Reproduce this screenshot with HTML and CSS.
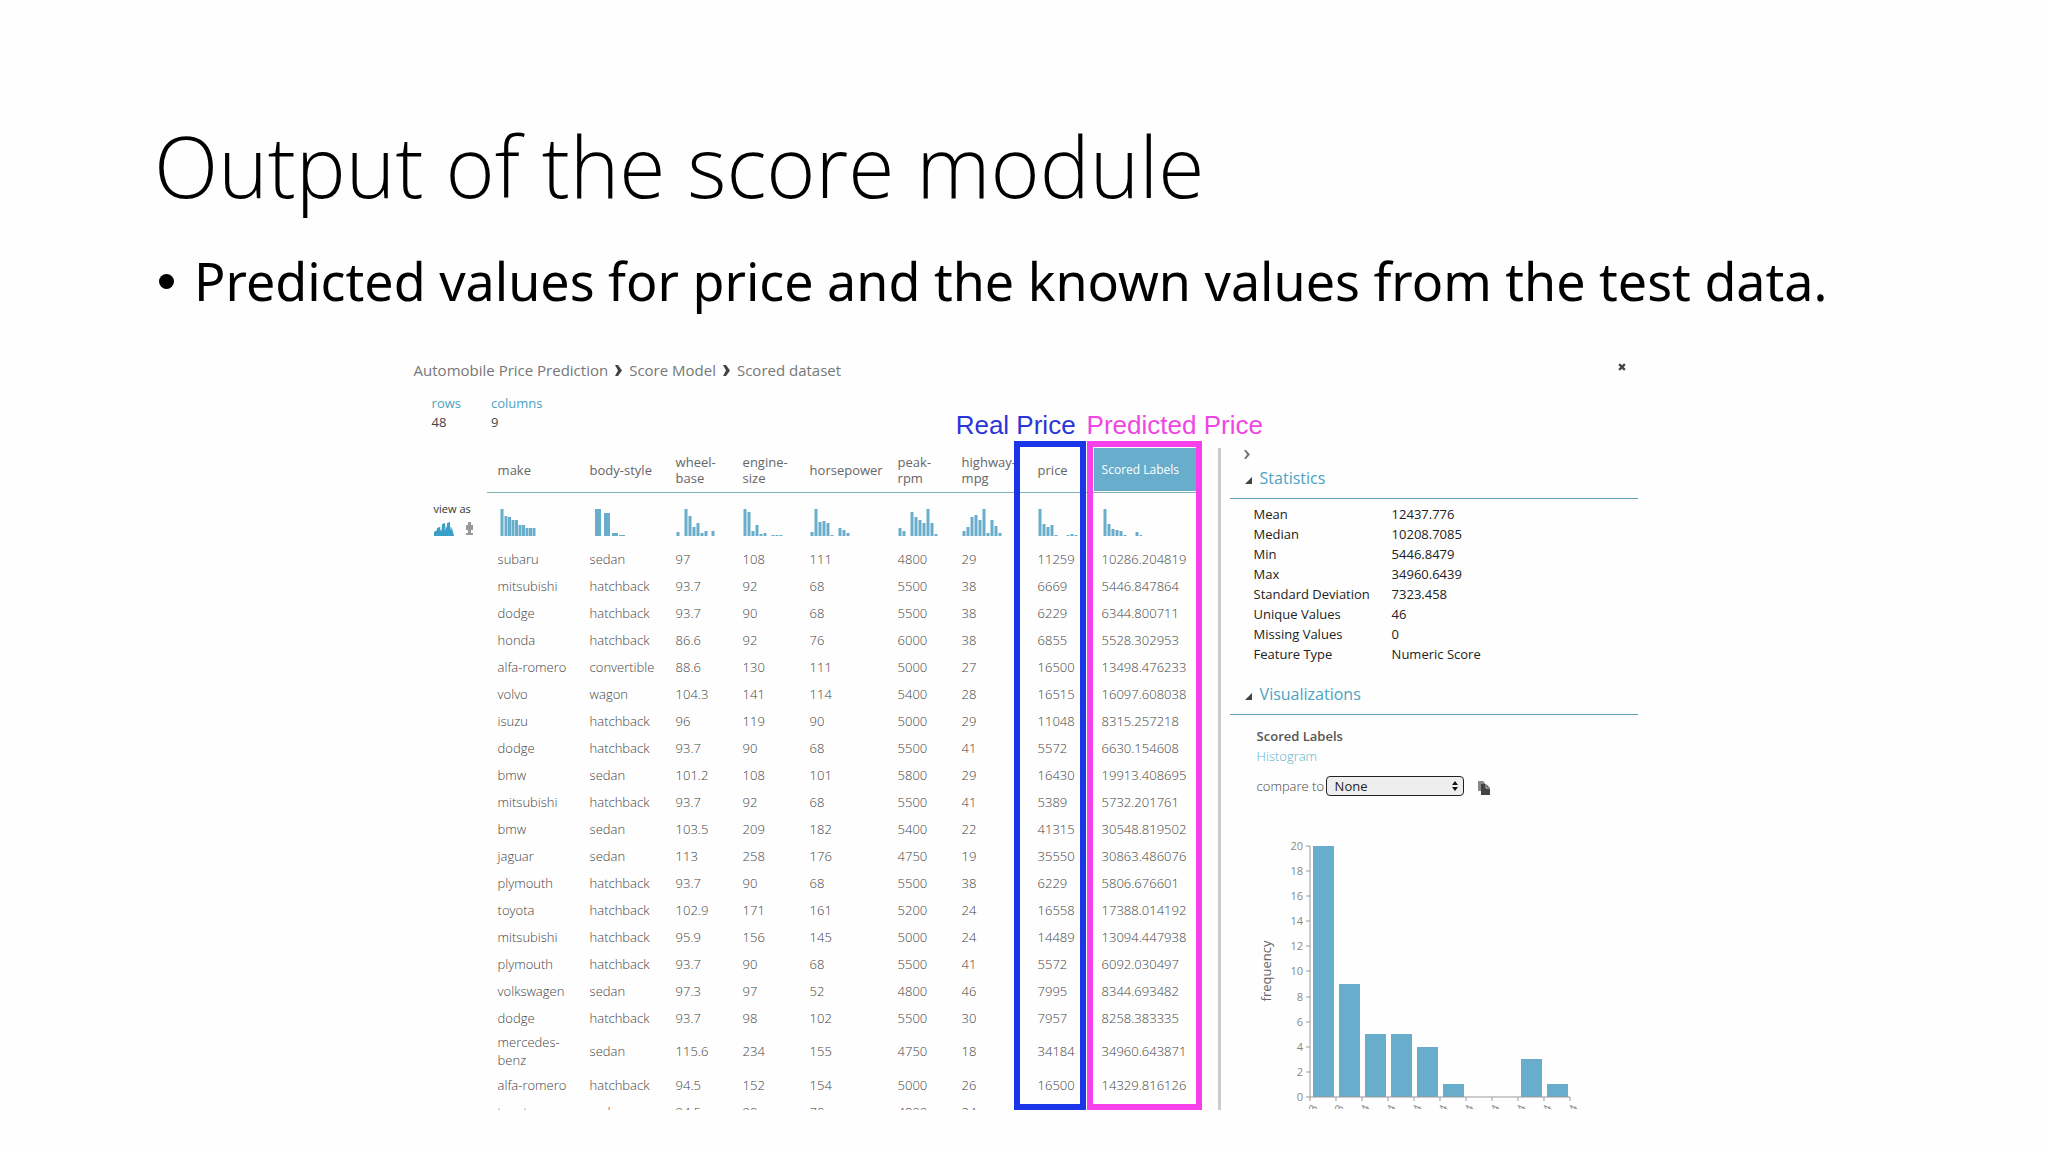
FILE: index.html
```
<!DOCTYPE html>
<html lang="en">
<head>
    <meta charset="UTF-8">
    <meta name="viewport" content="width=device-width, initial-scale=1.0">
    <title>Output of the score module</title>
    <link rel="stylesheet" href="styles.css">
</head>
<body>
    <header>
        <h1>Output of the score module</h1>
        <ul class="points">
            <li>Predicted values for price and the known values from the test data.</li>
        </ul>
    </header>
    <main class="dataset">
        <div class="top-bar">
            <nav class="breadcrumb">
                <a href="#">Automobile Price Prediction</a>
                <svg width="7" height="11" viewBox="0 0 7 11"><path d="M0 0h3l4 5.500-4 5.500H0l3-5.500z"/></svg>
                <a href="#">Score Model</a>
                <svg width="7" height="11" viewBox="0 0 7 11"><path d="M0 0h3l4 5.500-4 5.500H0l3-5.500z"/></svg>
                <a href="#">Scored dataset</a>
            </nav>
            <button type="button" class="close" aria-label="Close">
                <svg width="8" height="8" viewBox="0 0 7 7"><path d="M1 1l5 5M6 1L1 6"/></svg>
            </button>
        </div>
        <dl class="summary">
            <div><dt>rows</dt><dd>48</dd></div>
            <div><dt>columns</dt><dd>9</dd></div>
        </dl>
        <div class="panes">
            <div class="view-as">
                <span>view as</span>
                <div class="view-buttons">
                    <button type="button" aria-label="Histogram view">
                        <svg width="20" height="14" viewBox="0 0 20 14"><path class="teal" d="M0 14V10l3-2V6l3-1v3l2-1V2l3-1v5l2-1V1l3-1v5l2 1 2 8z"/><path class="cut" d="M7 5v4M12 3l-1 5M17 5v3"/></svg>
                    </button>
                    <button type="button" aria-label="Box plot view">
                        <svg width="9" height="14" viewBox="0 0 9 14"><path class="gray" d="M3 0h3v3h2v5H6v3h2v2H1v-2h2V8H1V3h2z"/></svg>
                    </button>
                </div>
            </div>
            <div class="table-area">
                <div class="table-scroll">
                    <table>
                        <colgroup>
                            <col class="c-make"><col class="c-body"><col class="c-size"><col class="c-size"><col class="c-power"><col class="c-rpm"><col class="c-mpg"><col class="c-price"><col class="c-label">
                        </colgroup>
                        <thead>
                            <tr>
                                <th>make</th>
                                <th>body-style</th>
                                <th>wheel-<br>base</th>
                                <th>engine-<br>size</th>
                                <th>horsepower</th>
                                <th>peak-<br>rpm</th>
                                <th>highway-<br>mpg</th>
                                <th>price</th>
                                <th class="selected"><span>Scored Labels</span></th>
                            </tr>
                        </thead>
                        <tbody>
                            <tr class="charts">
                                <td><svg viewBox="0 0 40 28"><path d="M4 28V1M8 28V8M11.500 28V9M15 28V12M18.500 28V12M22 28V17M25.500 28V17M29 28V20M32.500 28V20M36 28V20"/></svg></td>
                                <td><svg class="wide" viewBox="0 0 40 28"><path d="M8 28V1M17 28V5M25 28V25M32 28V27"/></svg></td>
                                <td><svg viewBox="0 0 40 28"><path d="M2 28V24M10 28V1M14 28V8M18 28V19M22 28V15M26 28V25M30 28V23M37 28V23"/></svg></td>
                                <td><svg viewBox="0 0 40 28"><path d="M2 28V1M6 28V4M10 28V23M14 28V17M18 28V26M22 28V25M30 28V27M34 28V27M38 28V27"/></svg></td>
                                <td><svg viewBox="0 0 40 28"><path d="M2 28V24M6 28V1M10 28V14M14 28V13M18 28V15M22 28V27M30 28V20M34 28V22M38 28V25"/></svg></td>
                                <td><svg viewBox="0 0 40 28"><path d="M2 28V20M6 28V23M14 28V4M18 28V9M22 28V12M26 28V15M30 28V1M34 28V15M38 28V26"/></svg></td>
                                <td><svg viewBox="0 0 40 28"><path d="M2 28V23M6 28V19M10 28V9M14 28V7M18 28V12M22 28V1M26 28V25M30 28V12M34 28V18M38 28V25"/></svg></td>
                                <td><svg viewBox="0 0 40 28"><path d="M2 28V1M6 28V16M10 28V19M14 28V17M18 28V27M30 28V27M34 28V26M38 28V27"/></svg></td>
                                <td><svg viewBox="0 0 40 28"><path d="M3 28V1M7 28V16M11 28V21M15 28V22M19 28V23M23 28V27M35 28V24M39 28V27"/></svg></td>
                            </tr>
                            <tr><td>subaru</td><td>sedan</td><td>97</td><td>108</td><td>111</td><td>4800</td><td>29</td><td>11259</td><td>10286.204819</td></tr>
                            <tr><td>mitsubishi</td><td>hatchback</td><td>93.7</td><td>92</td><td>68</td><td>5500</td><td>38</td><td>6669</td><td>5446.847864</td></tr>
                            <tr><td>dodge</td><td>hatchback</td><td>93.7</td><td>90</td><td>68</td><td>5500</td><td>38</td><td>6229</td><td>6344.800711</td></tr>
                            <tr><td>honda</td><td>hatchback</td><td>86.6</td><td>92</td><td>76</td><td>6000</td><td>38</td><td>6855</td><td>5528.302953</td></tr>
                            <tr><td>alfa-romero</td><td>convertible</td><td>88.6</td><td>130</td><td>111</td><td>5000</td><td>27</td><td>16500</td><td>13498.476233</td></tr>
                            <tr><td>volvo</td><td>wagon</td><td>104.3</td><td>141</td><td>114</td><td>5400</td><td>28</td><td>16515</td><td>16097.608038</td></tr>
                            <tr><td>isuzu</td><td>hatchback</td><td>96</td><td>119</td><td>90</td><td>5000</td><td>29</td><td>11048</td><td>8315.257218</td></tr>
                            <tr><td>dodge</td><td>hatchback</td><td>93.7</td><td>90</td><td>68</td><td>5500</td><td>41</td><td>5572</td><td>6630.154608</td></tr>
                            <tr><td>bmw</td><td>sedan</td><td>101.2</td><td>108</td><td>101</td><td>5800</td><td>29</td><td>16430</td><td>19913.408695</td></tr>
                            <tr><td>mitsubishi</td><td>hatchback</td><td>93.7</td><td>92</td><td>68</td><td>5500</td><td>41</td><td>5389</td><td>5732.201761</td></tr>
                            <tr><td>bmw</td><td>sedan</td><td>103.5</td><td>209</td><td>182</td><td>5400</td><td>22</td><td>41315</td><td>30548.819502</td></tr>
                            <tr><td>jaguar</td><td>sedan</td><td>113</td><td>258</td><td>176</td><td>4750</td><td>19</td><td>35550</td><td>30863.486076</td></tr>
                            <tr><td>plymouth</td><td>hatchback</td><td>93.7</td><td>90</td><td>68</td><td>5500</td><td>38</td><td>6229</td><td>5806.676601</td></tr>
                            <tr><td>toyota</td><td>hatchback</td><td>102.9</td><td>171</td><td>161</td><td>5200</td><td>24</td><td>16558</td><td>17388.014192</td></tr>
                            <tr><td>mitsubishi</td><td>hatchback</td><td>95.9</td><td>156</td><td>145</td><td>5000</td><td>24</td><td>14489</td><td>13094.447938</td></tr>
                            <tr><td>plymouth</td><td>hatchback</td><td>93.7</td><td>90</td><td>68</td><td>5500</td><td>41</td><td>5572</td><td>6092.030497</td></tr>
                            <tr><td>volkswagen</td><td>sedan</td><td>97.3</td><td>97</td><td>52</td><td>4800</td><td>46</td><td>7995</td><td>8344.693482</td></tr>
                            <tr><td>dodge</td><td>hatchback</td><td>93.7</td><td>98</td><td>102</td><td>5500</td><td>30</td><td>7957</td><td>8258.383335</td></tr>
                            <tr class="tall"><td>mercedes-<br>benz</td><td>sedan</td><td>115.6</td><td>234</td><td>155</td><td>4750</td><td>18</td><td>34184</td><td>34960.643871</td></tr>
                            <tr><td>alfa-romero</td><td>hatchback</td><td>94.5</td><td>152</td><td>154</td><td>5000</td><td>26</td><td>16500</td><td>14329.816126</td></tr>
                            <tr><td>toyota</td><td>sedan</td><td>94.5</td><td>90</td><td>70</td><td>4800</td><td>24</td><td></td><td></td></tr>
                        </tbody>
                    </table>
                </div>
                <div class="mark real"><span>Real Price</span></div>
                <div class="mark predicted"><span>Predicted Price</span></div>
            </div>
            <aside>
                <button type="button" class="collapse" aria-label="Collapse panel">
                    <svg width="6" height="9" viewBox="0 0 6 9"><path d="M0 0h2l4 4.500L2 9H0l3-4.500z"/></svg>
                </button>
                <h2><svg width="7" height="7" viewBox="0 0 7 7"><path d="M7 0v7H0z"/></svg>Statistics</h2>
                <table class="stats">
                    <tr><th>Mean</th><td>12437.776</td></tr>
                    <tr><th>Median</th><td>10208.7085</td></tr>
                    <tr><th>Min</th><td>5446.8479</td></tr>
                    <tr><th>Max</th><td>34960.6439</td></tr>
                    <tr><th>Standard Deviation</th><td>7323.458</td></tr>
                    <tr><th>Unique Values</th><td>46</td></tr>
                    <tr><th>Missing Values</th><td>0</td></tr>
                    <tr><th>Feature Type</th><td>Numeric Score</td></tr>
                </table>
                <h2><svg width="7" height="7" viewBox="0 0 7 7"><path d="M7 0v7H0z"/></svg>Visualizations</h2>
                <div class="visual">
                    <h3>Scored Labels</h3>
                    <p>Histogram</p>
                    <div class="compare">
                        <label for="compare">compare to</label>
                        <div class="select-box">
                            <select id="compare">
                                <option>None</option>
                            </select>
                            <svg width="6" height="10" viewBox="0 0 6 10"><path d="M3 0l3 4H0zM3 10l3-4H0z"/></svg>
                        </div>
                        <button type="button" class="copy" aria-label="Copy">
                            <svg width="12" height="14" viewBox="0 0 12 14"><path class="back" d="M0 0h5l2 2v8H0z"/><path class="front" d="M3 3h5l4 4v7H3z"/><path class="fold" d="M8 3v4h4"/></svg>
                        </button>
                    </div>
                    <!-- histogram of the scored labels -->
                    <svg class="chart" width="330" height="272" viewBox="0 0 330 272">
                        <text class="axis-title" transform="translate(14 134) rotate(-90)">frequency</text>
                        <g class="bars">
                            <rect x="56" y="9" width="21" height="251"/>
                            <rect x="82" y="147" width="21" height="113"/>
                            <rect x="108" y="197" width="21" height="63"/>
                            <rect x="134" y="197" width="21" height="63"/>
                            <rect x="160" y="210" width="21" height="50"/>
                            <rect x="186" y="247" width="21" height="13"/>
                            <rect x="264" y="222" width="21" height="38"/>
                            <rect x="290" y="247" width="21" height="13"/>
                        </g>
                        <path class="axis" d="M49 9h4v251h-4M49 34h4M49 59h4M49 84h4M49 109h4M49 134h4M49 160h4M49 185h4M49 210h4M49 235h4M53 264v-4h260v4M79 260v4M105 260v4M131 260v4M157 260v4M183 260v4M209 260v4M235 260v4M261 260v4M287 260v4"/>
                        <g class="y-labels">
                            <text x="46" y="13">20</text>
                            <text x="46" y="38">18</text>
                            <text x="46" y="63">16</text>
                            <text x="46" y="88">14</text>
                            <text x="46" y="113">12</text>
                            <text x="46" y="138">10</text>
                            <text x="46" y="164">8</text>
                            <text x="46" y="189">6</text>
                            <text x="46" y="214">4</text>
                            <text x="46" y="239">2</text>
                            <text x="46" y="264">0</text>
                        </g>
                        <g class="x-labels">
                            <text transform="translate(61 270) rotate(-65)">5.4e+3</text>
                            <text transform="translate(87 270) rotate(-65)">8.4e+3</text>
                            <text transform="translate(113 270) rotate(-65)">1.1e+4</text>
                            <text transform="translate(139 270) rotate(-65)">1.4e+4</text>
                            <text transform="translate(165 270) rotate(-65)">1.7e+4</text>
                            <text transform="translate(191 270) rotate(-65)">2.0e+4</text>
                            <text transform="translate(217 270) rotate(-65)">2.3e+4</text>
                            <text transform="translate(243 270) rotate(-65)">2.6e+4</text>
                            <text transform="translate(269 270) rotate(-65)">2.9e+4</text>
                            <text transform="translate(295 270) rotate(-65)">3.2e+4</text>
                            <text transform="translate(321 270) rotate(-65)">3.5e+4</text>
                        </g>
                    </svg>
                </div>
            </aside>
        </div>
    </main>
</body>
</html>
```
FILE: styles.css
```
* {
    box-sizing: border-box;
}
body {
    font-family: "Open Sans", sans-serif;
    font-size: 13px;
    margin: 0;
    background-color: #fefefe;
    color: #666;
}
header {
    padding: 110px 154px 0;
    color: #000;
}
h1 {
    margin: 0;
    font-family: "Open Sans", sans-serif;
    font-size: 84px;
    font-weight: 300;
    line-height: 112px;
}
.points {
    list-style: none;
    margin: 23px 0 0;
    padding: 0;
    font-family: "Noto Sans", sans-serif;
    font-size: 52px;
    line-height: 72px;
}
.points li {
    display: flex;
    align-items: center;
    gap: 20px;
    white-space: nowrap;
}
.points li::before {
    content: "";
    width: 15px;
    height: 15px;
    margin-left: 5px;
    border-radius: 50%;
    background-color: #000;
}
button {
    display: flex;
    padding: 0;
    border: none;
    background: none;
    cursor: pointer;
}
.dataset {
    padding: 41px 20% 0;
}
.top-bar {
    display: flex;
    justify-content: space-between;
    padding: 0 12px 0 4px;
}
.breadcrumb {
    display: flex;
    align-items: center;
    gap: 7px;
    font-size: 15px;
    line-height: 24px;
}
.breadcrumb a {
    color: #777;
    text-decoration: none;
}
.breadcrumb svg {
    fill: #444;
}
.close {
    margin-top: 5px;
}
.close svg {
    stroke: #444;
    stroke-width: 2;
}
.summary {
    display: flex;
    gap: 30px;
    height: 54px;
    margin: 12px 0 0;
    padding-left: 22px;
    line-height: 19px;
}
.summary dt {
    color: #4ba3c3;
}
.summary dd {
    margin: 0;
    color: #444;
}
.panes {
    display: flex;
    height: 662px;
}
.view-as {
    flex: none;
    width: 77px;
    padding: 53px 0 0 24px;
    font-size: 11px;
    font-weight: 500;
    line-height: 16px;
    color: #333;
}
.view-buttons {
    display: flex;
    gap: 11px;
    margin-top: 5px;
}
.teal {
    fill: #3a9fc6;
}
.cut {
    fill: none;
    stroke: #b5dbe9;
}
.gray {
    fill: #999;
}
.table-area {
    position: relative;
    flex: none;
}
.table-scroll {
    height: 100%;
    overflow: hidden;
}
table {
    border-collapse: collapse;
    table-layout: fixed;
}
.table-scroll table {
    width: 713px;
    color: #444;
}
.c-make { width: 92px; }
.c-body { width: 86px; }
.c-size { width: 67px; }
.c-power { width: 88px; }
.c-rpm { width: 64px; }
.c-mpg { width: 76px; }
.c-price { width: 64px; }
th, td {
    padding: 0 0 0 11px;
    text-align: left;
    font-weight: 300;
    white-space: nowrap;
}
thead th {
    height: 44px;
    border-bottom: 1px solid #84b0b8;
    color: #666;
    line-height: 16px;
    font-weight: 400;
}
thead .selected {
    padding: 0 4px 0 3px;
    color: #fff;
}
.selected span {
    display: block;
    padding-left: 8px;
    background-color: #68adcb;
    font-size: 12px;
    line-height: 43px;
}
tbody td {
    height: 27px;
    line-height: 18px;
}
.charts td {
    height: 53px;
}
.charts svg {
    display: block;
    width: 40px;
    height: 28px;
    margin-top: 6px;
    fill: none;
    stroke: #68adcb;
    stroke-width: 3;
}
.charts .wide {
    stroke-width: 6;
}
.tall td {
    height: 40px;
}
/* highlighted columns */
.mark {
    position: absolute;
    top: -7px;
    bottom: 0;
    border: 6px solid;
}
.mark span {
    position: absolute;
    bottom: 100%;
    margin-bottom: 6px;
    font-family: "Liberation Sans", Arial, sans-serif;
    font-size: 26px;
    line-height: 32px;
    white-space: nowrap;
}
.real {
    left: 527px;
    width: 72px;
    border-color: #1a35e8;
    color: #2a35d8;
}
.real span {
    right: 4px;
}
.predicted {
    left: 600px;
    width: 115px;
    border-color: #f740ec;
    color: #f047e2;
}
.predicted span {
    left: -6px;
}
aside {
    flex: 1;
    margin-left: 18px;
    padding-left: 9px;
    border-left: 3px solid #ccc;
    overflow: hidden;
}
.collapse {
    margin: 2px 0 0 14px;
}
.collapse svg {
    fill: #777;
}
aside h2 {
    display: flex;
    align-items: baseline;
    gap: 8px;
    height: 40px;
    margin: 0;
    padding: 8px 0 0 15px;
    border-bottom: 1px solid #5ea0b8;
    color: #4ba3c3;
    font-size: 16px;
    font-weight: 400;
    line-height: 22px;
}
aside h2 svg {
    fill: #444;
}
.stats {
    margin: 5px 0 11px 24px;
    color: #222;
    line-height: 18px;
}
.stats th, .stats td {
    height: 20px;
    padding: 0;
    font-weight: 500;
}
.stats th {
    width: 138px;
}
.visual {
    padding-left: 27px;
    line-height: 20px;
}
.visual h3 {
    margin: 11px 0 0;
    color: #555;
    font-size: 13px;
    font-weight: 600;
}
.visual p {
    margin: 0;
    color: #5fb0c9;
    font-weight: 300;
}
.compare {
    display: flex;
    align-items: center;
    height: 20px;
    margin-top: 10px;
}
.compare label {
    width: 69px;
    color: #444;
    font-weight: 300;
    white-space: nowrap;
}
.select-box {
    position: relative;
    width: 138px;
}
.select-box select {
    display: block;
    width: 100%;
    height: 20px;
    padding: 0 8px;
    appearance: none;
    border: 1px solid #222;
    border-radius: 4px;
    background-color: #eee;
    color: #222;
    font-family: inherit;
    font-size: 13px;
    line-height: 18px;
}
.select-box svg {
    position: absolute;
    right: 6px;
    top: 5px;
    fill: #111;
}
.copy {
    margin: 4px 0 0 14px;
}
.back {
    fill: #888;
}
.front {
    fill: #444;
}
.fold {
    fill: none;
    stroke: #ccc;
}
.chart {
    display: block;
    margin-top: 41px;
}
.bars {
    fill: #68adcb;
}
.axis {
    fill: none;
    stroke: #999;
}
.chart text {
    fill: #888;
    font-size: 11px;
}
.chart .axis-title {
    fill: #666;
    font-size: 13px;
    text-anchor: middle;
}
.y-labels, .x-labels {
    text-anchor: end;
}
```
